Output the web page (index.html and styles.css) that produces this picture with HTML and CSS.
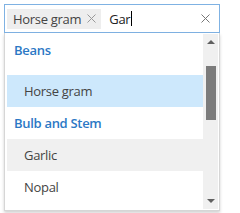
FILE: index.html
```html
<!DOCTYPE html>
<html lang="en">
<head>
    <meta charset="UTF-8">
    <title>Vegetables</title>
    <link rel="stylesheet" href="styles.css">
</head>
<body>
<div class="wrap">
    <!-- multiselect input -->
    <div class="input">
        <span class="chip">Horse gram
            <svg class="chip-close" width="9" height="9" viewBox="0 0 9 9"><path d="M0.5 0.5L8.5 8.5M8.5 0.5L0.5 8.5" stroke="#999" stroke-width="1" fill="none"/></svg>
        </span>
        <span class="typed">Gar<span class="caret"></span></span>
        <svg class="clear" width="9" height="9" viewBox="0 0 9 9"><path d="M0.5 0.5L8.5 8.5M8.5 0.5L0.5 8.5" stroke="#777" stroke-width="1" fill="none"/></svg>
    </div>

    <!-- popup list -->
    <div class="popup">
        <div class="list">
            <div class="group">Beans</div>
            <div class="spacer"></div>
            <div class="item active">Horse gram</div>
            <div class="group">Bulb and Stem</div>
            <div class="item hover">Garlic</div>
            <div class="item">Nopal</div>
        </div>
        <div class="scrollbar">
            <span class="arrow up"></span>
            <div class="track"><div class="thumb"></div></div>
            <span class="arrow down"></span>
        </div>
    </div>
</div>
</body>
</html>
```

FILE: styles.css
```css
* {
    margin: 0;
    padding: 0;
    box-sizing: border-box;
}

body {
    font-family: 'Open Sans', sans-serif;
    font-size: 13px;
    color: #333;
    background: #fff;
}

.wrap {
    padding: 4px;
    width: 224px;
}

/* Input */
.input {
    height: 29px;
    border: 1px solid #7fb2e3;
    display: flex;
    align-items: center;
    padding: 0 2px;
}

.chip {
    background: #eeeeee;
    height: 20px;
    line-height: 20px;
    padding: 0 5px 0 6px;
    display: flex;
    align-items: center;
    color: #444;
    letter-spacing: -0.3px;
}

.chip-close {
    margin-left: 6px;
}

.typed {
    margin-left: 8px;
    color: #222;
    display: flex;
    align-items: center;
    letter-spacing: -0.3px;
}

.caret {
    width: 1px;
    height: 15px;
    background: #000;
    margin-left: 1px;
}

.clear {
    margin-left: auto;
    margin-right: 7px;
}

/* Popup */
.popup {
    height: 178px;
    border: 1px solid #d6d6d6;
    border-top: none;
    box-shadow: 0 2px 3px rgba(0, 0, 0, 0.18);
    display: flex;
    background: #fff;
}

.list {
    flex: 1;
    padding: 1px 0 0 2px;
    overflow: hidden;
}

.group {
    height: 32px;
    line-height: 32px;
    padding-left: 7px;
    color: #2b78c5;
    font-weight: 600;
    letter-spacing: -0.3px;
}

.spacer { height: 9px; }

.item {
    height: 32px;
    line-height: 32px;
    padding-left: 17px;
    color: #444;
    letter-spacing: -0.3px;
}

.item.active { background: #cde8fc; }
.item.hover { background: #f0f0f0; }

.scrollbar {
    width: 15px;
    margin: 1px 1px 1px 0;
    background: #f0f0f0;
    display: flex;
    flex-direction: column;
    align-items: center;
}

.arrow {
    width: 0;
    height: 0;
    border-left: 4px solid transparent;
    border-right: 4px solid transparent;
    margin: 6px 0;
}

.arrow.up { border-bottom: 4px solid #606060; }
.arrow.down { border-top: 4px solid #606060; }

.track {
    flex: 1;
    width: 100%;
    padding-top: 16px;
    display: flex;
    justify-content: center;
}

.thumb {
    width: 10px;
    height: 54px;
    background: #7c7c7c;
}
```
